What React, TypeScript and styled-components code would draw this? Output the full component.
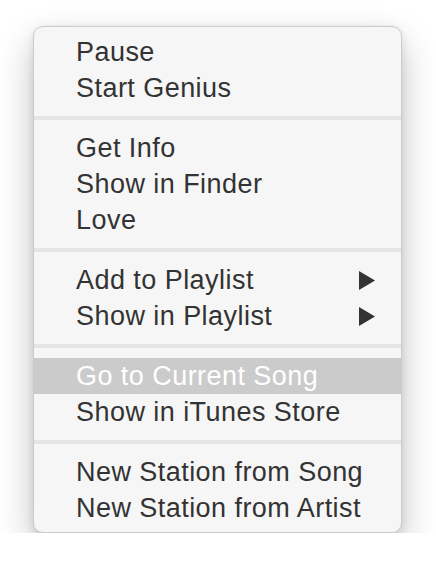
import React from "react";
import styled, { createGlobalStyle } from "styled-components";

const Global = createGlobalStyle`
  html, body { margin: 0; padding: 0; background: #ffffff; }
  body { font-family: "Liberation Sans", Arial, Helvetica, sans-serif; }
`;

const Page = styled.div`
  padding: 26px 0 0 33px;
`;

const Menu = styled.div`
  box-sizing: border-box;
  width: 369px;
  height: 507px;
  background: #f6f6f6;
  border: 1px solid #cbcbcb;
  border-radius: 10px;
  box-shadow: 0 16px 36px rgba(0, 0, 0, 0.24), 0 2px 8px rgba(0, 0, 0, 0.1);
  padding: 7px 0 6px;
  display: flex;
  flex-direction: column;
  overflow: hidden;
`;

const Item = styled.div<{ $active?: boolean }>`
  height: 36px;
  display: flex;
  align-items: center;
  justify-content: space-between;
  padding: 0 26px 0 42px;
  font-family: "Liberation Sans", Arial, sans-serif;
  font-size: 27px;
  letter-spacing: 0.45px;
  color: ${(p) => (p.$active ? "#ffffff" : "#333333")};
  background: ${(p) => (p.$active ? "#cbcbcb" : "transparent")};
  white-space: nowrap;
`;

const Separator = styled.div`
  height: 4px;
  margin: 10px 0;
  background: #e4e4e4;
`;

const Arrow = () => (
  <svg width="16" height="19" viewBox="0 0 16 19">
    <polygon points="0,0 16,9.5 0,19" fill="#333333" />
  </svg>
);

type Entry = { label: string; sub?: boolean; active?: boolean };
const groups: Entry[][] = [
  [{ label: "Pause" }, { label: "Start Genius" }],
  [{ label: "Get Info" }, { label: "Show in Finder" }, { label: "Love" }],
  [
    { label: "Add to Playlist", sub: true },
    { label: "Show in Playlist", sub: true },
  ],
  [{ label: "Go to Current Song", active: true }, { label: "Show in iTunes Store" }],
  [{ label: "New Station from Song" }, { label: "New Station from Artist" }],
];

export default function App() {
  return (
    <>
      <Global />
      <Page>
        <Menu>
          {groups.map((g, gi) => (
            <React.Fragment key={gi}>
              {gi > 0 && <Separator />}
              {g.map((e) => (
                <Item key={e.label} $active={e.active}>
                  <span>{e.label}</span>
                  {e.sub && <Arrow />}
                </Item>
              ))}
            </React.Fragment>
          ))}
        </Menu>
      </Page>
    </>
  );
}
